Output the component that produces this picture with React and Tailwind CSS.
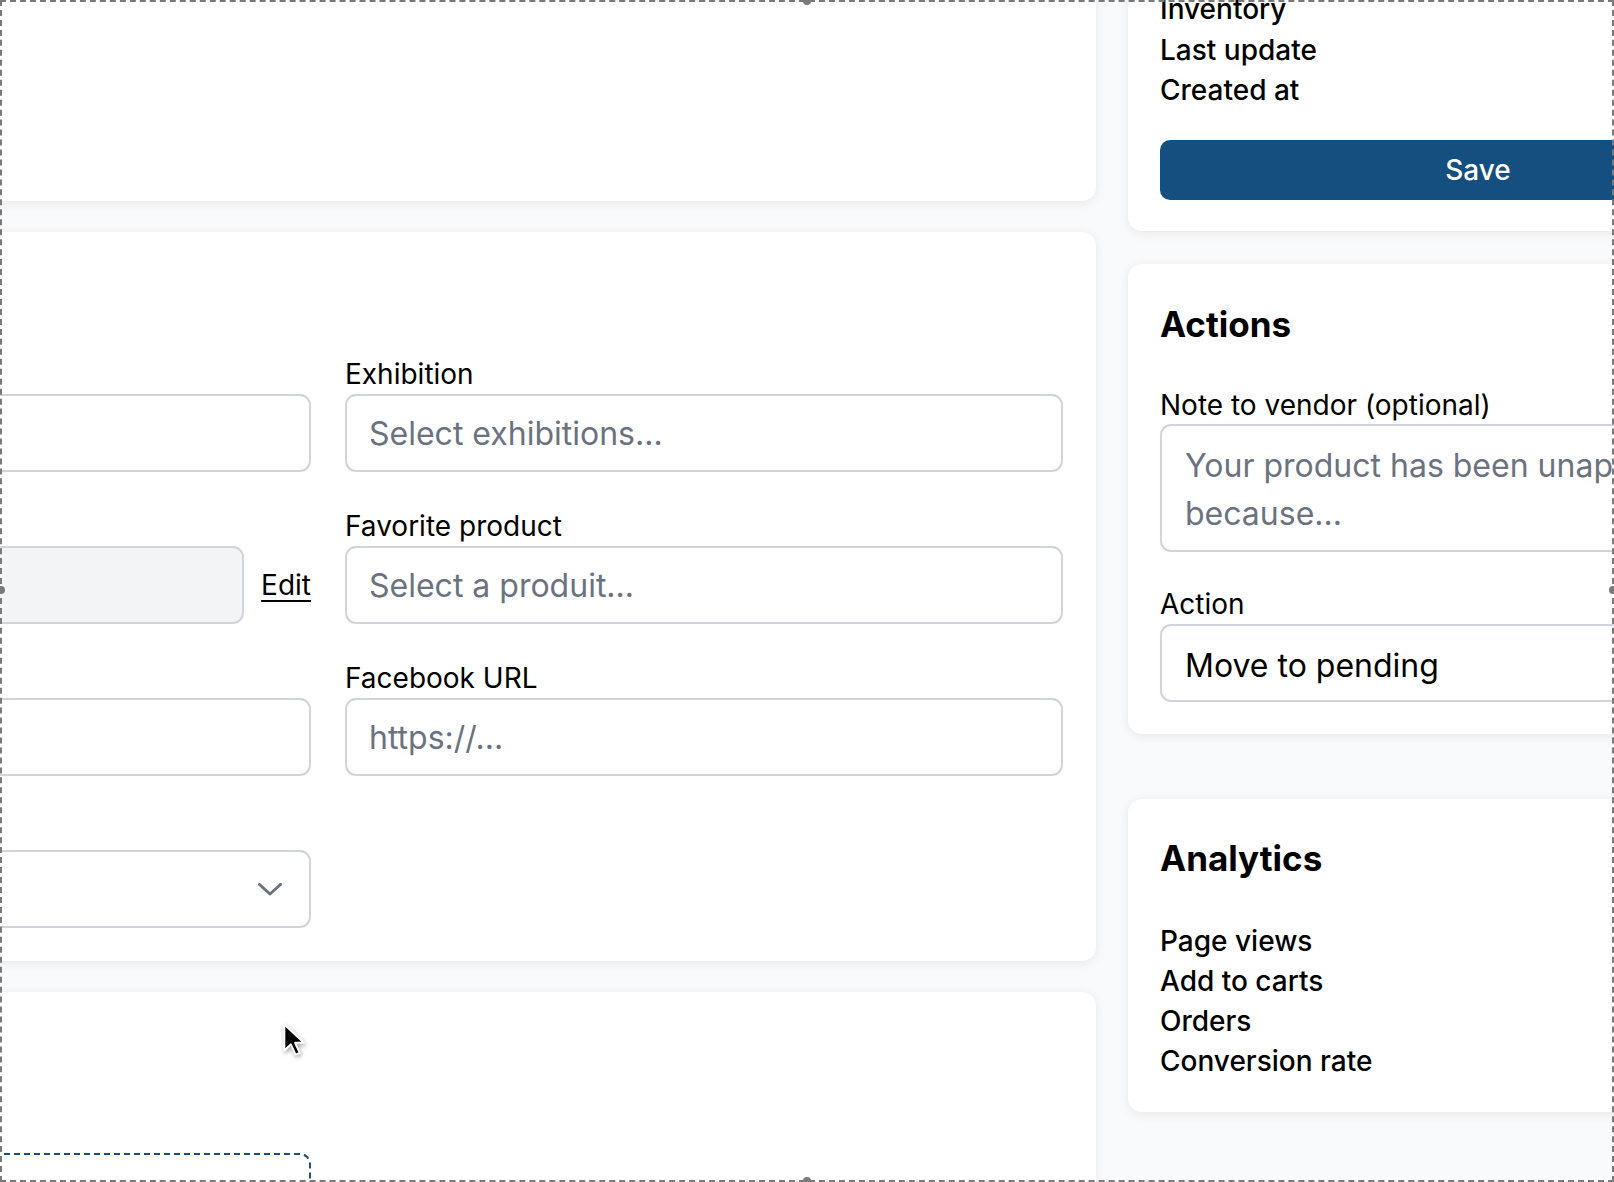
import React from "react";

const Card = ({ className = "", children }) => (
  <section
    className={`rounded-[14px] bg-white shadow-[0_2px_12px_rgba(0,0,0,0.08)] ${className}`}
  >
    {children}
  </section>
);

const Label = ({ children, tight }) => (
  <label
    className={`block text-[28px] text-black ${tight ? "leading-[38px]" : "leading-[40px]"}`}
  >
    {children}
  </label>
);

const inputClass =
  "block h-[78px] w-full rounded-[11px] border-2 border-[#d1d5db] bg-white px-[22px] text-[32px] text-black outline-none placeholder:text-[#6b7280]";

const Chevron = () => (
  <svg width="24" height="13" viewBox="0 0 24 13" fill="none">
    <polyline
      points="1.5,1.5 12,11 22.5,1.5"
      stroke="#6b7280"
      strokeWidth="3"
      strokeLinecap="round"
      strokeLinejoin="round"
    />
  </svg>
);

// labels of the left column sit outside the captured area, keep the space only
const Field = ({ label, children }) => (
  <div>
    {label ? <Label>{label}</Label> : <div className="h-[40px]" />}
    {children}
  </div>
);

const App = () => {
  return (
    <div className="relative h-[1182px] w-[1614px] overflow-hidden bg-[#f9fafb] font-[Inter,sans-serif] text-black">
      <div className="ml-[-440px] mt-[-45px] flex items-start gap-[32px]">
        {/* main column */}
        <div className="flex w-[1536px] shrink-0 flex-col gap-[31px]">
          <Card className="h-[246px]" />

          <Card className="px-[33px] pb-[33px] pt-[35px]">
            <div className="h-[49px]" />
            <div className="mt-[38px] grid grid-cols-2 gap-x-[34px] gap-y-[34px]">
              <Field>
                <input className={inputClass} />
              </Field>
              <Field label="Exhibition">
                <input className={inputClass} placeholder="Select exhibitions..." />
              </Field>

              <Field>
                <div className="flex items-center gap-[17px]">
                  <div className="h-[78px] flex-1 rounded-[11px] border-2 border-[#d1d5db] bg-[#f3f4f6]" />
                  <a className="text-[28px] leading-[40px] text-black underline decoration-[2px] underline-offset-[5px]">
                    Edit
                  </a>
                </div>
              </Field>
              <Field label="Favorite product">
                <input className={inputClass} placeholder="Select a produit..." />
              </Field>

              <Field>
                <input className={inputClass} />
              </Field>
              <Field label="Facebook URL">
                <input className={inputClass} placeholder="https://..." />
              </Field>

              <Field>
                <div className="flex h-[78px] w-full items-center justify-end rounded-[11px] border-2 border-[#d1d5db] bg-white pl-[22px] pr-[27px]">
                  <Chevron />
                </div>
              </Field>
              <div />
            </div>
          </Card>

          <Card className="h-[400px] px-[33px] pt-[35px]">
            <div className="h-[49px]" />
            <div className="mt-[37px] grid grid-cols-2 gap-x-[34px]">
              <div>
                <div className="h-[40px]" />
                <div className="h-[200px] rounded-[11px] border-2 border-dashed border-[#1d4d7a]" />
              </div>
            </div>
          </Card>
        </div>

        {/* side column */}
        <div className="flex w-[700px] shrink-0 flex-col">
          <Card className="px-[32px] pb-[31px] pt-[34px]">
            <ul className="text-[28px] font-medium leading-[40.5px]">
              <li>Inventory</li>
              <li>Last update</li>
              <li>Created at</li>
            </ul>
            <button
              type="button"
              className="mt-[29.5px] flex h-[60px] w-full items-center justify-center rounded-[10px] bg-[#154f7f] text-[28px] font-medium text-white"
            >
              Save
            </button>
          </Card>

          <Card className="mt-[33px] px-[32px] pb-[32px] pt-[36px]">
            <h2 className="text-[35px] font-bold leading-[49px]">Actions</h2>
            <div className="mt-[37px]">
              <Label tight>Note to vendor (optional)</Label>
              <textarea
                className="block h-[128px] w-full resize-none rounded-[11px] border-2 border-[#d1d5db] bg-white px-[23px] pt-[16px] text-[32px] leading-[48px] outline-none placeholder:text-[#6b7280]"
                placeholder="Your product has been unapproved because..."
              />
            </div>
            <div className="mt-[33px]">
              <Label tight>Action</Label>
              <div className="mt-[1px] flex h-[78px] w-full items-center justify-between rounded-[11px] border-2 border-[#d1d5db] bg-white pl-[23px] pr-[27px]">
                <span className="pt-[5px] text-[32px]">Move to pending</span>
                <Chevron />
              </div>
            </div>
          </Card>

          <Card className="mt-[65px] px-[32px] pb-[31px] pt-[35px]">
            <h2 className="text-[35px] font-bold leading-[49px]">Analytics</h2>
            <ul className="mt-[38px] text-[28px] font-medium leading-[40px]">
              <li>Page views</li>
              <li>Add to carts</li>
              <li>Orders</li>
              <li>Conversion rate</li>
            </ul>
          </Card>
        </div>
      </div>

      {/* selection frame over the capture */}
      <div className="pointer-events-none absolute inset-0 border-2 border-dashed border-[#7a7a7a]" />
      <span className="pointer-events-none absolute left-[803px] top-[-3px] h-[8px] w-[8px] rounded-full bg-[#7a7a7a]" />
      <span className="pointer-events-none absolute bottom-[-3px] left-[803px] h-[8px] w-[8px] rounded-full bg-[#7a7a7a]" />
      <span className="pointer-events-none absolute left-[-3px] top-[586px] h-[8px] w-[8px] rounded-full bg-[#7a7a7a]" />
      <span className="pointer-events-none absolute right-[-3px] top-[586px] h-[8px] w-[8px] rounded-full bg-[#7a7a7a]" />

      {/* mouse pointer */}
      <svg
        className="pointer-events-none absolute left-[282px] top-[1022px] drop-shadow-[1px_2px_2px_rgba(0,0,0,0.35)]"
        width="26"
        height="38"
        viewBox="0 0 22 32"
      >
        <path
          d="M2 2 L2 24 L7.5 18.8 L11.5 27.5 L15 26 L11 17.5 L18.5 17.5 Z"
          fill="#000"
          stroke="#fff"
          strokeWidth="1.6"
          strokeLinejoin="round"
        />
      </svg>
    </div>
  );
};

export default App;
